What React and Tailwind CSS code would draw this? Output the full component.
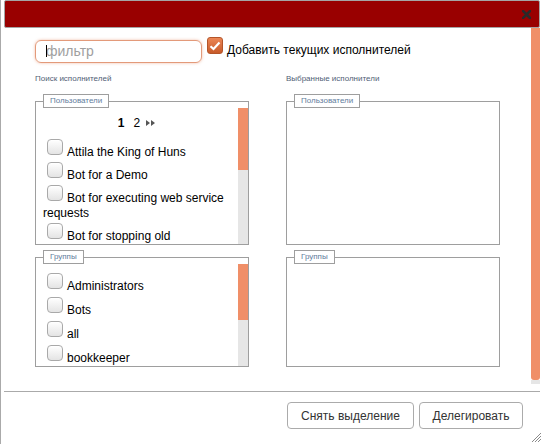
import { useState } from 'react'

const users = [
  'Attila the King of Huns',
  'Bot for a Demo',
  'Bot for executing web service requests',
  'Bot for stopping old conversations',
  'Demo User',
]

const groups = ['Administrators', 'Bots', 'all', 'bookkeeper', 'developers']

function Box() {
  return (
    <span className="inline-block w-[16px] h-[16px] ml-[4px] mr-[4px] align-[1px] rounded-[4px] border border-[#a9a9a9] bg-linear-to-b from-white to-[#e4e4e4] shadow-[inset_0_1px_0_#fff]"></span>
  )
}

function Item({ label }) {
  return (
    <div className="pl-[7px] mb-[2px] text-[12px] leading-[15px] text-black">
      <Box />
      {label}
    </div>
  )
}

function Panel({ title, bodyClass, thumbClass, children }) {
  return (
    <fieldset className="min-w-0 border border-[#9e9e9e]">
      <legend className="ml-[7px] h-[14px] px-[6px] border border-[#9e9e9e] bg-white text-[8px] leading-[12px] text-[#5f7d9c]">
        {title}
      </legend>
      <div className={`flex ${bodyClass}`}>
        <div className="flex-1 min-w-0 overflow-hidden">{children}</div>
        {thumbClass && (
          <div className="w-[10px] bg-[#e6e6e6]">
            <div className={`bg-[#f08f68] ${thumbClass}`}></div>
          </div>
        )}
      </div>
    </fieldset>
  )
}

export default function App() {
  const [addCurrent, setAddCurrent] = useState(true)

  return (
    <div className="w-[543px] h-[444px] bg-white border-l border-[#aaaaaa] relative overflow-hidden font-['Liberation_Sans',Arial,sans-serif]">
      {/* Title bar */}
      <div className="mx-[3px] h-[28px] rounded-[2px] border border-[#a5a5a5] bg-[#990000] flex items-center justify-end pr-[8px]">
        <svg width="9" height="9" viewBox="0 0 9 9">
          <path d="M1 1L8 8M8 1L1 8" stroke="#2a2a2a" strokeWidth="2.6" strokeLinecap="square" />
        </svg>
      </div>

      {/* Body */}
      <div className="flex h-[363px] mr-[3px]">
        <div className="flex-1 min-w-0 overflow-hidden pl-[34px] pt-[11px]">
          <div className="flex items-start">
            <div className="relative">
              <input
                placeholder="фильтр"
                className="w-[167px] h-[23px] pl-[10px] rounded-[6px] border border-[#e39a7a] shadow-[0_0_3px_rgba(230,130,90,0.55)] text-[14px] text-black placeholder:text-[#a0a0a0] outline-none"
              />
              <span className="absolute left-[11px] top-[6px] w-px h-[12px] bg-black"></span>
            </div>
            <button
              onClick={() => setAddCurrent(!addCurrent)}
              className="ml-[5px] -mt-[2px] w-[16px] h-[17px] rounded-[3px] border border-[#b4552a] bg-linear-to-b from-[#ec8655] to-[#c75a29] flex items-center justify-center"
            >
              {addCurrent && (
                <svg width="12" height="10" viewBox="0 0 12 10">
                  <path d="M1.5 5.2L4.5 8L10.5 1.5" stroke="#fff" strokeWidth="2.2" fill="none" />
                </svg>
              )}
            </button>
            <span className="ml-[4px] mt-[3px] text-[12px] leading-[16px] text-black">Добавить текущих исполнителей</span>
          </div>

          <div className="flex gap-[37px]">
            <div className="w-[214px]">
              <div className="mt-[11px] text-[8px] leading-[10px] text-[#4f6075]">Поиск исполнителей</div>
              <div className="mt-[10px]">
                <Panel title="Пользователи" bodyClass="h-[136px]" thumbClass="h-[62px]">
                  <div className="pt-[7px] mb-[8px] flex items-center justify-center gap-[9px] text-[12px] leading-[16px] text-black">
                    <span className="font-bold">1</span>
                    <span>2</span>
                    <svg width="10" height="6" viewBox="0 0 10 6" className="-ml-[3px]">
                      <path d="M0 0L4 3L0 6Z M5 0L9 3L5 6Z" fill="#555" />
                    </svg>
                  </div>
                  {users.map((u) => (
                    <Item key={u} label={u} />
                  ))}
                </Panel>
              </div>
              <div className="mt-[5px]">
                <Panel title="Группы" bodyClass="h-[102px]" thumbClass="h-[56px]">
                  <div className="pt-[9px]">
                    {groups.map((g) => (
                      <div key={g} className="mb-[3px]">
                        <Item label={g} />
                      </div>
                    ))}
                  </div>
                </Panel>
              </div>
            </div>

            <div className="w-[214px]">
              <div className="mt-[11px] text-[8px] leading-[10px] text-[#4f6075]">Выбранные исполнители</div>
              <div className="mt-[10px]">
                <Panel title="Пользователи" bodyClass="h-[136px]" />
              </div>
              <div className="mt-[5px]">
                <Panel title="Группы" bodyClass="h-[102px]" />
              </div>
            </div>
          </div>
        </div>

        {/* Dialog scrollbar */}
        <div className="w-[9px]">
          <div className="h-[352px] bg-[#f08f68] rounded-b-[3px]"></div>
          <div className="h-[4px] bg-[#e6e6e6]"></div>
        </div>
      </div>

      {/* Footer */}
      <div className="mx-[3px] border-t border-[#aaaaaa] pt-[10px] pr-[17px] flex justify-end gap-[5px]">
        <button className="w-[127px] h-[27px] rounded-[4px] border border-[#ababab] bg-white text-[12px] text-[#333]">
          Снять выделение
        </button>
        <button className="w-[104px] h-[27px] rounded-[4px] border border-[#ababab] bg-white text-[12px] text-[#333]">
          Делегировать
        </button>
      </div>

      {/* Resize grip */}
      <svg width="12" height="12" viewBox="0 0 12 12" className="absolute right-[1px] bottom-[1px]">
        <path d="M11 2L2 11M11 5L5 11M11 8L8 11" stroke="#8a8a8a" strokeWidth="1" />
      </svg>
    </div>
  )
}
